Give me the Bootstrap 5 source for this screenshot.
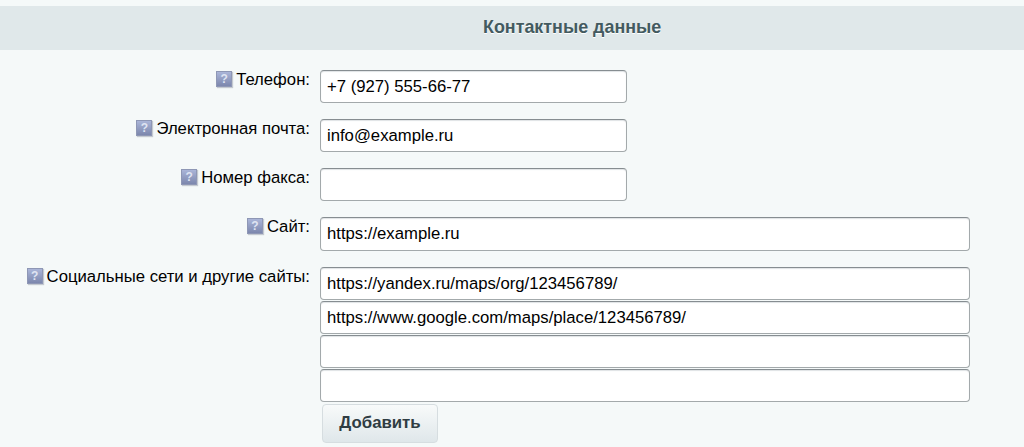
<!DOCTYPE html>
<html lang="ru">
<head>
<meta charset="utf-8">
<link href="https://cdn.jsdelivr.net/npm/bootstrap@5.3.0/dist/css/bootstrap.min.css" rel="stylesheet">
<style>
html,body{height:447px;overflow:hidden}
body{background:#f5f9f9;font-family:"Liberation Sans",Arial,sans-serif;font-size:16.7px;color:#000;padding-top:6px}
.sect-head{height:44px;background:#e0e8ea;color:#435a60;font-weight:700;font-size:17.9px;line-height:42px;padding-left:483px;margin-bottom:20px;text-shadow:0 1px #fff}
.lbl-col{width:310px;flex:none;line-height:20px;color:#000}
.fld-row{margin-bottom:16px}
.hint-ico{display:inline-block;width:16px;height:16px;vertical-align:2px;margin-right:4px;background:linear-gradient(#aab5d8,#7c87ad);border:1px solid #8e97b5;box-shadow:1px 1px 1px #c4c9d0;color:#dfe4f2;font-size:12px;font-weight:700;line-height:14px;text-align:center}
.fld-in{display:block;height:33px;margin-left:10px;padding:0 6px;border:1px solid #a3a9ab;border-top-color:#868d91;border-radius:4px;background:#fff;font-size:16.7px;font-family:inherit;color:#000;box-shadow:inset 0 1px 1px #dfe3e5;outline:0}
.fld-tall{height:34px}
.w-s{width:307px}
.w-l{width:650px}
.soc-list{gap:1px}
.add-btn{margin:1px 0 0 12px;width:116px;height:39px;padding:0 0 2px;border:1px solid #d6dde0;border-radius:4px;background:linear-gradient(#f8fafa,#dfe7ea);color:#2f3c42;font-weight:700;font-size:16.8px;font-family:inherit}
</style>
</head>
<body>
<div class="sect-head">Контактные данные</div>
<div class="d-flex fld-row">
  <div class="lbl-col text-end"><span class="hint-ico">?</span>Телефон:</div>
  <input class="fld-in w-s" value="+7 (927) 555-66-77">
</div>
<div class="d-flex fld-row">
  <div class="lbl-col text-end"><span class="hint-ico">?</span>Электронная почта:</div>
  <input class="fld-in w-s" value="info@example.ru">
</div>
<div class="d-flex fld-row">
  <div class="lbl-col text-end"><span class="hint-ico">?</span>Номер факса:</div>
  <input class="fld-in w-s" value="">
</div>
<div class="d-flex fld-row">
  <div class="lbl-col text-end"><span class="hint-ico">?</span>Сайт:</div>
  <input class="fld-in fld-tall w-l" value="https://example.ru">
</div>
<div class="d-flex">
  <div class="lbl-col text-end"><span class="hint-ico">?</span>Социальные сети и другие сайты:</div>
  <div class="d-flex flex-column soc-list">
    <input class="fld-in w-l" value="https://yandex.ru/maps/org/123456789/">
    <input class="fld-in w-l" value="https://www.google.com/maps/place/123456789/">
    <input class="fld-in w-l" value="">
    <input class="fld-in w-l" value="">
    <button class="add-btn" type="button">Добавить</button>
  </div>
</div>
<script src="https://cdn.jsdelivr.net/npm/bootstrap@5.3.0/dist/js/bootstrap.bundle.min.js"></script>
</body>
</html>
